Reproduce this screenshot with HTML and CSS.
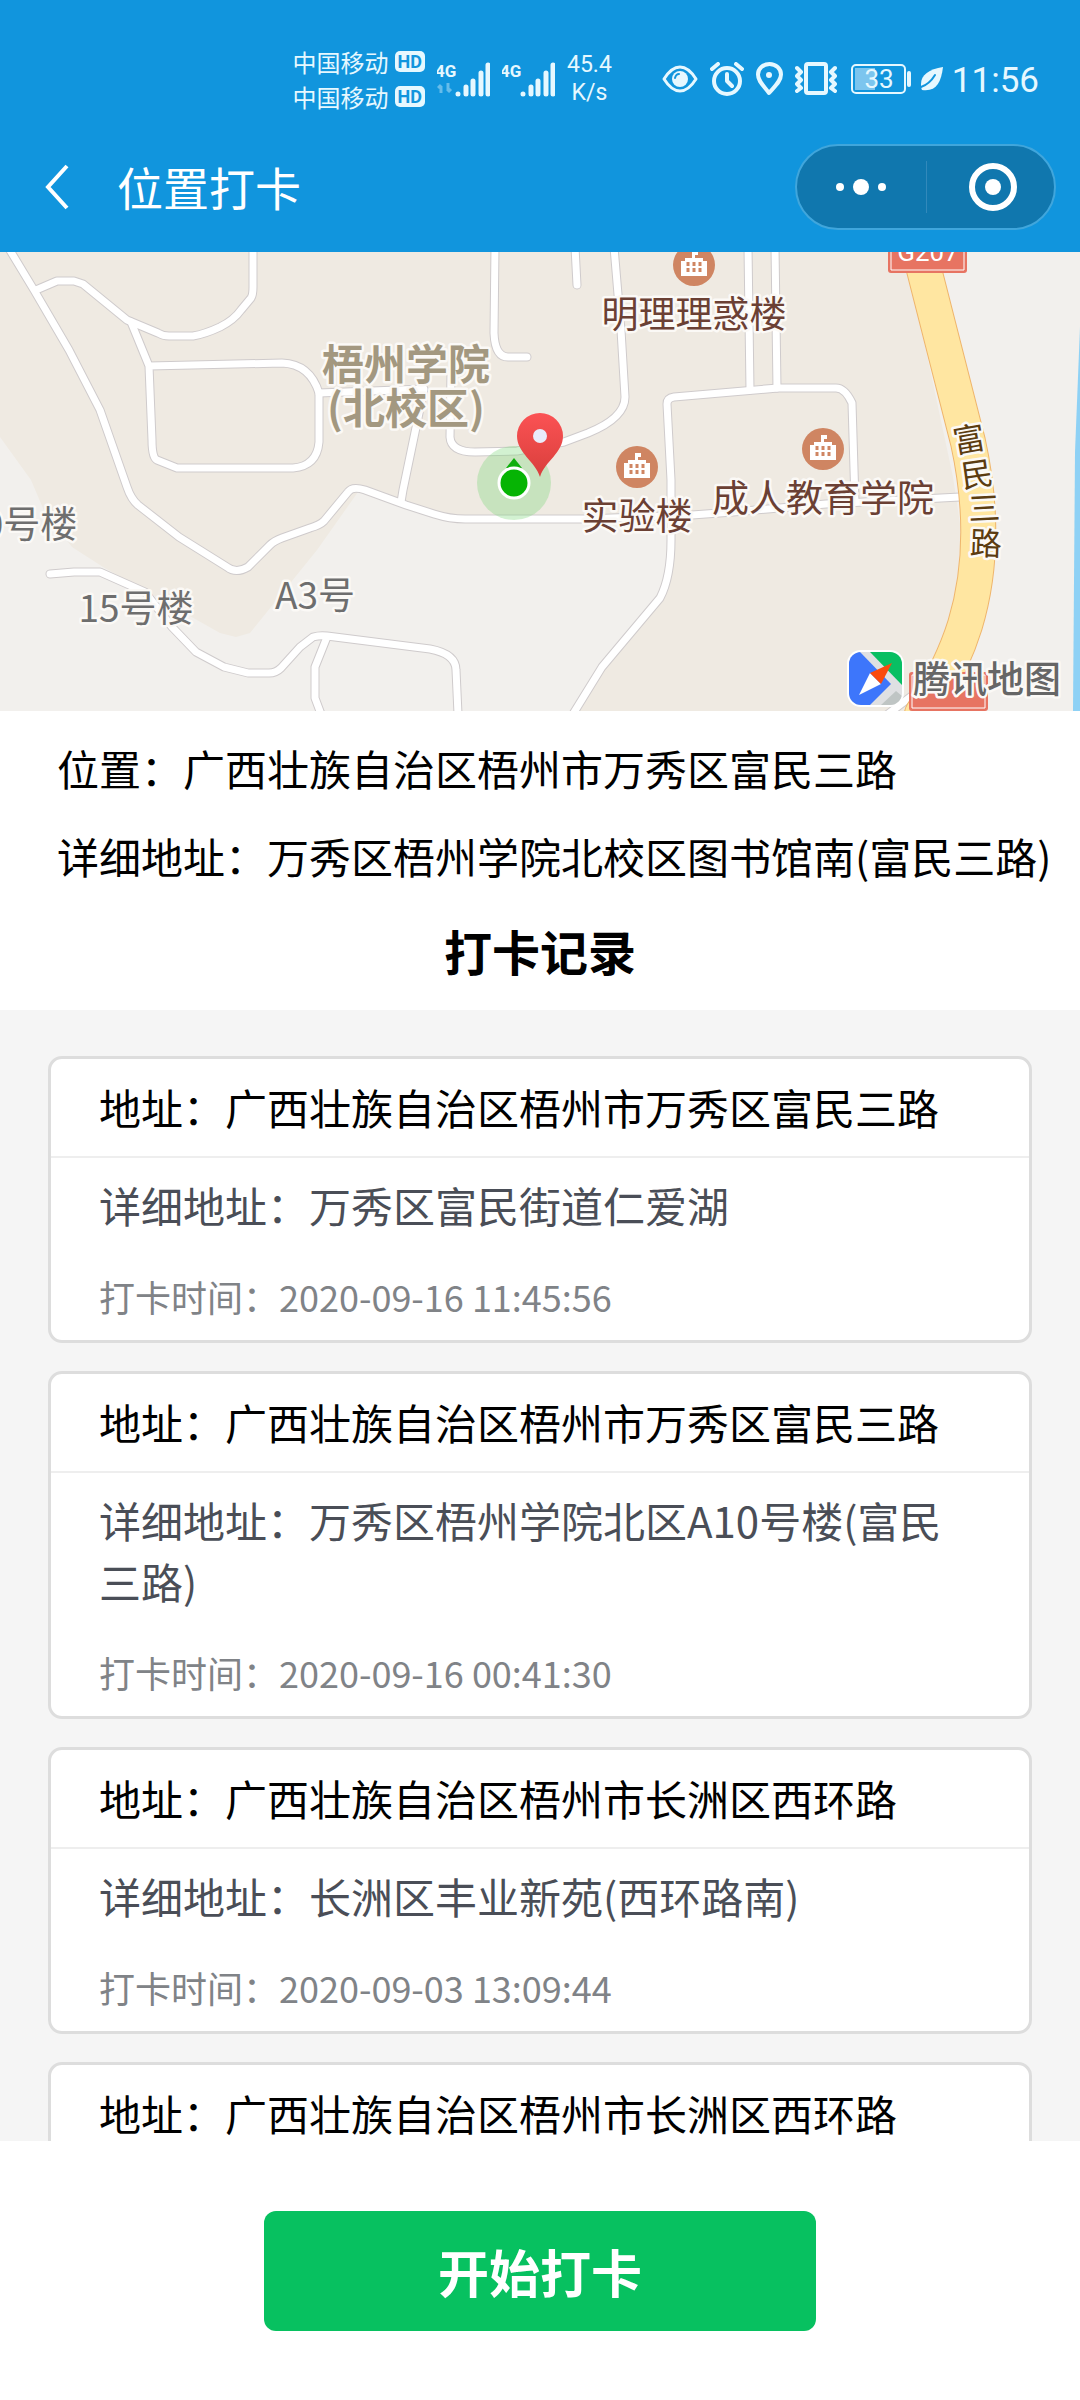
FILE: index.html
```html
<!DOCTYPE html>
<html lang="zh-CN">
<head>
<meta charset="utf-8">
<meta name="viewport" content="width=device-width, initial-scale=1">
<title>位置打卡</title>
<link rel="stylesheet" href="styles.css">
</head>
<body>
<div class="app">
  <header class="top">
    <div class="status">
      <div class="status-group">
        <div class="carriers">
          <div class="carrier">中国移动<span class="hd">HD</span></div>
          <div class="carrier">中国移动<span class="hd">HD</span></div>
        </div>
        <svg class="signal" viewBox="0 0 53 36" width="53" height="36">
          <text class="net" x="-2" y="16">4G</text>
          <path class="data" d="M4 32V25M1 27l3-3M11 22v8M14 28l-3 3"/>
          <path class="bars" d="M21 33v0M29 33v-7M36 33V20M44 33V12M51 33V4"/>
        </svg>
        <svg class="signal" viewBox="0 0 53 36" width="53" height="36">
          <text class="net" x="-2" y="16">4G</text>
          <path class="bars" d="M21 33v0M29 33v-7M36 33V20M44 33V12M51 33V4"/>
        </svg>
        <div class="speed">45.4<br>K/s</div>
      </div>
      <div class="status-group">
        <svg class="icon" viewBox="0 0 36 32" width="36" height="32">
          <path d="M2 16C7 8 12 4 18 4s11 4 16 12c-5 8-10 12-16 12S7 24 2 16z"/>
          <circle class="solid" cx="18" cy="16" r="8"/>
          <path class="cut" d="M13 15q1-4 4-4"/>
        </svg>
        <svg class="icon bold" viewBox="0 0 34 34" width="34" height="34">
          <circle cx="17" cy="19" r="13"/>
          <path d="M17 12v7l5 5M2 7l6-5M32 7l-6-5"/>
        </svg>
        <svg class="icon bold" viewBox="0 0 27 34" width="27" height="34">
          <path d="M13 31C7 23 2 19 2 12.500a11.500 10.500 0 0 1 23 0C25 19 19 24 13 31z"/>
          <circle class="solid" cx="13" cy="13" r="3"/>
        </svg>
        <svg class="icon bold" viewBox="0 0 42 34" width="42" height="34">
          <rect x="11" y="2" width="20" height="29" rx="2"/>
          <path d="M2 6l4 4-4 4 4 4-4 4 4 4-4 3M40 6l-4 4 4 4-4 4 4 4-4 4 4 3"/>
        </svg>
      </div>
      <div class="status-group battery-group">
        <svg class="icon" viewBox="0 0 61 30" width="61" height="30">
          <rect class="level" x="4" y="4" width="20" height="22"/>
          <rect class="shell" x="1" y="1" width="53" height="28" rx="4"/>
          <path class="nub" d="M58 9v12"/>
          <text class="percent" x="28" y="24">33</text>
        </svg>
        <svg class="icon" viewBox="0 0 24 26" width="24" height="26">
          <path class="leaf" d="M23 1C9 3 1 9 1 18c0 2 0 4 1 6 14 2 19-7 21-23z"/>
          <path class="vein" d="M1 21C7 19 12 14 15 9"/>
        </svg>
        <time class="clock">11:56</time>
      </div>
    </div>
    <nav class="nav">
      <button class="back" type="button" aria-label="返回">
        <svg viewBox="0 0 24 46" width="24" height="46"><path d="M22 2L3 23l19 21"/></svg>
      </button>
      <h1 class="nav-title">位置打卡</h1>
      <div class="capsule">
        <button class="capsule-btn" type="button" aria-label="更多">
          <svg viewBox="0 0 50 20" width="50" height="20"><circle cx="4" cy="10" r="4"/><circle cx="25" cy="10" r="8"/><circle cx="46" cy="10" r="4"/></svg>
        </button>
        <button class="capsule-btn" type="button" aria-label="关闭">
          <svg viewBox="0 0 50 50" width="50" height="50"><circle class="ring" cx="25" cy="25" r="21"/><circle cx="25" cy="25" r="8"/></svg>
        </button>
      </div>
    </nav>
  </header>

  <svg class="map" viewBox="0 0 1080 459" preserveAspectRatio="xMidYMid slice" role="img" aria-label="地图">
    <defs>
      <g id="poi">
        <circle r="21" fill="#cf8562"/>
        <path fill="#fff" d="M-2-14h6v4H1v3h8v3h4v15h-26V-4h4v-3h7z"/>
        <path stroke="#cf8562" stroke-width="3" stroke-dasharray="4 2" d="M-6-3V7M0-3V7M6-3V7"/>
      </g>
      <linearGradient id="pinFill" x1="0" y1="0" x2="0" y2="1">
        <stop offset="0" stop-color="#fb5254"/>
        <stop offset="1" stop-color="#d93f3c"/>
      </linearGradient>
      <clipPath id="logoClip"><rect x="849" y="400" width="53" height="53" rx="12"/></clipPath>
      <g id="roads">
        <path d="M8-5L34 38 69 98 100 158 127 235Q131 247 138 253L179 285 227 315Q236 322 248 315L270 293Q274 289 282 286L310 276Q320 273 324 269L348 240Q352 234 365 238L406 253 434 262Q450 267 465 267H585L692 263 733 260 826 252 960 245"/>
        <path d="M36 38L57 29H74L83 32 127 68 158 81Q163 84 169 84H193Q205 82 220 75 234 68 241 58L251 46Q253 43 253 35V-5"/>
        <path d="M131 70L149 114 152 188Q152 206 157 208L177 216H293Q317 214 319 190V141Q310 112 282 111L149 114"/>
        <path d="M319 141L424 137 403 238 401 250"/>
        <path d="M451 121L450 185Q451 200 475 200L517 199 564 190 588 181Q625 166 625 145L621 78 614-5"/>
        <path d="M495-5L494 81Q495 105 508 105H527M575-5L577 33M748-5L750 138M775-5L777 136"/>
        <path d="M855 250L852 151Q845 136 836 136H778L674 145Q667 146 667 152L671 228V288Q671 325 660 346L602 415 573 462"/>
        <path d="M50 322L74 320H100L145 340 172 375 196 400 224 415 248 421H269Q276 421 281 416L300 395 313 385Q320 383 327 384L430 397Q456 402 456 418L458 462"/>
        <path d="M327 385L315 415V446L321 462M888 462L930 430"/>
      </g>
    </defs>
    <rect width="1080" height="459" fill="#f2f0ed"/>
    <path fill="#efeae2" d="M0 0H905L953 225 961 278 958 328 948 375 905 459H573L660 346 671 288V264L585 267H465L358 240 317 298 250 381 236 385 220 381 103 315 72 295 45 261 31 228 0 185z"/>
    <path fill="#8ed1f5" d="M1080 75L1075 200 1073 459H1080z"/>
    <use href="#roads" class="road-edge"/>
    <use href="#roads" class="road-fill"/>
    <path class="highway-edge" d="M917-10L968 190Q990 290 965 373 952 415 922 462"/>
    <path class="highway-fill" d="M917-10L968 190Q990 290 965 373 952 415 922 462"/>

    <g class="badge">
      <rect x="888" y="-19" width="79" height="40" rx="3"/>
      <path d="M891-10V18H964V-10"/>
      <text x="928" y="9">G207</text>
      <rect x="909" y="420" width="79" height="39" rx="3"/>
      <path d="M912 423H985V456H912z"/>
    </g>

    <use href="#poi" x="694" y="13"/>
    <use href="#poi" x="637" y="215"/>
    <use href="#poi" x="823" y="197"/>

    <g class="label campus">
      <text x="406" y="128">梧州学院</text>
      <text x="406" y="172">(北校区)</text>
    </g>
    <g class="label building">
      <text x="694" y="76">明理理惑楼</text>
      <text x="637" y="278">实验楼</text>
      <text x="823" y="260">成人教育学院</text>
    </g>
    <g class="label block">
      <text x="30" y="286">0号楼</text>
      <text x="136" y="370">15号楼</text>
      <text x="315" y="357">A3号</text>
    </g>
    <g class="label street">
      <text transform="translate(969 187) rotate(-10)" y="12">富</text>
      <text transform="translate(977 222) rotate(-8)" y="12">民</text>
      <text transform="translate(984 256) rotate(-3)" y="12">三</text>
      <text transform="translate(986 291) rotate(2)" y="12">路</text>
    </g>

    <circle cx="514" cy="231" r="37" fill="#7fd67a" fill-opacity=".35"/>
    <path fill="#0fae0c" d="M514 206L522 216H506z"/>
    <circle cx="514" cy="231" r="15" fill="#06b404" stroke="#fff" stroke-width="3"/>
    <path fill="url(#pinFill)" d="M540 225C535 209 517 201 517 184a23 23 0 0 1 46 0C563 201 545 209 540 225z"/>
    <circle cx="540" cy="184" r="7" fill="#e9ecfb"/>

    <rect x="847" y="398" width="57" height="57" rx="14" fill="#fff"/>
    <g clip-path="url(#logoClip)">
      <path fill="#dfe0e2" d="M849 400h53v53h-53z"/>
      <path fill="#3d76fb" d="M849 400h11l31 32-21 21h-21z"/>
      <path fill="#08bf63" d="M870 400h32v33z"/>
      <path fill="#bfc5c4" d="M881 453l15-14 6 5v9z"/>
      <path fill="#fff" d="M859 443l11-22 11 11z"/>
      <path fill="#fa4a0c" d="M892 411l-22 10 11 11z"/>
    </g>
    <text class="label brand" x="987" y="441">腾讯地图</text>
  </svg>

  <section class="info">
    <p class="info-row">位置：广西壮族自治区梧州市万秀区富民三路</p>
    <p class="info-row">详细地址：万秀区梧州学院北校区图书馆南(富民三路)</p>
    <h2 class="info-title">打卡记录</h2>
  </section>

  <main class="records">
    <article class="card">
      <h3 class="card-head">地址：广西壮族自治区梧州市万秀区富民三路</h3>
      <div class="card-body">
        <p class="detail">详细地址：万秀区富民街道仁爱湖</p>
        <p class="stamp">打卡时间：2020-09-16 11:45:56</p>
      </div>
    </article>
    <article class="card">
      <h3 class="card-head">地址：广西壮族自治区梧州市万秀区富民三路</h3>
      <div class="card-body">
        <p class="detail">详细地址：万秀区梧州学院北区A10号楼(富民三路)</p>
        <p class="stamp">打卡时间：2020-09-16 00:41:30</p>
      </div>
    </article>
    <article class="card">
      <h3 class="card-head">地址：广西壮族自治区梧州市长洲区西环路</h3>
      <div class="card-body">
        <p class="detail">详细地址：长洲区丰业新苑(西环路南)</p>
        <p class="stamp">打卡时间：2020-09-03 13:09:44</p>
      </div>
    </article>
    <article class="card">
      <h3 class="card-head">地址：广西壮族自治区梧州市长洲区西环路</h3>
    </article>
  </main>

  <footer class="actions">
    <button class="submit" type="button">开始打卡</button>
  </footer>
</div>
</body>
</html>
```
FILE: styles.css
```css
* {
  box-sizing: border-box;
}

body,
h1,
h2,
h3,
p {
  margin: 0;
}

body {
  font-family: "Noto Sans CJK SC", sans-serif;
  color: #000;
  background: #fff;
}

button {
  margin: 0;
  padding: 0;
  border: 0;
  background: none;
  font: inherit;
  color: inherit;
}

svg {
  display: block;
  flex: none;
}

.app {
  display: flex;
  flex-direction: column;
  height: 100vh;
}

/* Status bar and navigation */
.top {
  flex: none;
  background: #1195dd;
  color: #e6f8ff;
}

.status {
  display: flex;
  justify-content: flex-end;
  align-items: center;
  padding: 44px 41px 8px;
}

.status-group {
  display: flex;
  align-items: center;
  gap: 12px;
  margin-left: 50px;
}

.battery-group {
  gap: 8px;
  margin-left: 14px;
}

.carrier {
  display: flex;
  align-items: center;
  gap: 6px;
  font-size: 24px;
  line-height: 35px;
}

.hd {
  padding: 0 3px;
  border-radius: 5px;
  background: #e6f8ff;
  color: #1195dd;
  font: 700 18px/21px Roboto, sans-serif;
}

.net {
  font: 700 17px Roboto, sans-serif;
  fill: #e6f8ff;
}

.bars,
.data {
  fill: none;
  stroke: #e6f8ff;
  stroke-width: 5;
  stroke-linecap: round;
}

.data {
  stroke-width: 3;
  stroke-linecap: butt;
  opacity: .4;
}

.speed {
  font: 23px/28px Roboto, sans-serif;
  text-align: center;
}

.icon {
  fill: none;
  stroke: #e6f8ff;
  stroke-width: 3;
  stroke-linecap: round;
  stroke-linejoin: round;
}

.bold {
  stroke-width: 4;
}

.icon .solid,
.icon .leaf {
  fill: #e6f8ff;
  stroke: none;
}

.icon .cut,
.icon .vein {
  stroke: #1195dd;
  stroke-width: 2;
}

.icon .shell {
  stroke-width: 2;
}

.icon .nub {
  stroke-width: 4;
}

.icon .level {
  fill: #7cc5ee;
  stroke: none;
}

.icon .percent {
  font: 26px Roboto, sans-serif;
  text-anchor: middle;
  fill: #e6f8ff;
  stroke: none;
}

.clock {
  padding-top: 3px;
  font: 35px/44px Roboto, sans-serif;
}

.nav {
  display: flex;
  align-items: center;
  height: 130px;
  padding: 0 24px 0 45px;
  color: #fff;
}

.back svg {
  fill: none;
  stroke: #fff;
  stroke-width: 4;
}

.nav-title {
  margin-left: 48px;
  padding-bottom: 3px;
  font-size: 46px;
  font-weight: 400;
  line-height: 60px;
}

.capsule {
  display: flex;
  width: 261px;
  height: 86px;
  margin-left: auto;
  border: 2px solid #40a6dc;
  border-radius: 43px;
  background: #1077ae;
}

.capsule-btn {
  display: flex;
  flex: 1;
  align-items: center;
  justify-content: center;
  fill: #fff;
}

.capsule-btn + .capsule-btn::before {
  content: "";
  width: 1px;
  height: 52px;
  margin-right: auto;
  background: #3289bb;
}

.capsule-btn + .capsule-btn svg {
  margin-right: 36px;
}

.ring {
  fill: none;
  stroke: #fff;
  stroke-width: 6;
}

/* Map */
.map {
  width: 100%;
}

.road-edge,
.road-fill,
.highway-edge,
.highway-fill {
  fill: none;
  stroke-linecap: round;
  stroke-linejoin: round;
}

.road-edge {
  stroke: #cfcbcc;
  stroke-width: 9;
}

.road-fill {
  stroke: #fff;
  stroke-width: 7;
}

.highway-edge {
  stroke: #efb56c;
  stroke-width: 36;
}

.highway-fill {
  stroke: #ffe6a1;
  stroke-width: 34;
}

.badge rect {
  fill: #e77462;
}

.badge path {
  fill: none;
  stroke: #fff;
  stroke-width: 1;
}

.badge text {
  font: 26px Roboto, sans-serif;
  text-anchor: middle;
  fill: #fff;
}

.label {
  font-size: 37px;
  text-anchor: middle;
  paint-order: stroke;
  stroke: #fbf9f6;
  stroke-width: 5;
  stroke-linejoin: round;
}

.campus {
  font-size: 42px;
  font-weight: 700;
  fill: #a39880;
}

.building {
  fill: #6b4034;
}

.block {
  fill: #6e6e6e;
}

.street {
  font-size: 32px;
  fill: #5c3c10;
}

.brand {
  font-weight: 500;
  fill: #666;
}

/* Current position */
.info {
  flex: none;
  padding: 13px 20px 10px 57px;
}

.info-row {
  font-size: 42px;
  line-height: 88px;
}

.info-title {
  margin-left: -37px;
  font-size: 48px;
  line-height: 100px;
  text-align: center;
}

/* Check-in records */
.records {
  display: flex;
  flex: 1;
  flex-direction: column;
  gap: 28px;
  min-height: 0;
  padding: 46px 48px 0;
  overflow-y: auto;
  scrollbar-width: none;
  background: #f5f5f5;
}

.card {
  flex: none;
  border: 3px solid #ddd;
  border-radius: 14px;
  background: #fff;
}

.card-head {
  padding: 18px 48px 19px;
  border-bottom: 2px solid #eee;
  font-size: 42px;
  font-weight: 400;
  line-height: 60px;
}

.card-body {
  padding: 16px 80px 18px 48px;
}

.detail {
  font-size: 42px;
  line-height: 61px;
  color: #4a4e57;
}

.stamp {
  margin-top: 35px;
  font-size: 36px;
  line-height: 52px;
  color: #808387;
}

/* Bottom action */
.actions {
  display: flex;
  flex: none;
  justify-content: center;
  padding: 70px 24px 69px;
}

.submit {
  width: 552px;
  max-width: 100%;
  border-radius: 12px;
  background: #07c160;
  color: #fff;
  font-size: 51px;
  font-weight: 700;
  line-height: 120px;
}
```
